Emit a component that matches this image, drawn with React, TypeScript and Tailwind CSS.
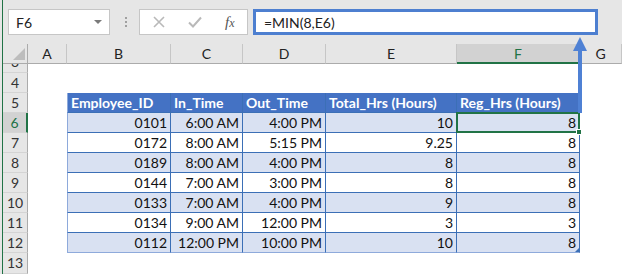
import React from "react";

const FONT = { fontFamily: "Lato, 'Open Sans', sans-serif" };

const COLS = ["A", "B", "C", "D", "E", "F", "G"];

const rows: string[][] = [
  ["0101", "6:00 AM", "4:00 PM", "10", "8"],
  ["0172", "8:00 AM", "5:15 PM", "9.25", "8"],
  ["0189", "8:00 AM", "4:00 PM", "8", "8"],
  ["0144", "7:00 AM", "3:00 PM", "8", "8"],
  ["0133", "7:00 AM", "4:00 PM", "9", "8"],
  ["0134", "9:00 AM", "12:00 PM", "3", "3"],
  ["0112", "12:00 PM", "10:00 PM", "10", "8"],
];

const heads = ["Employee_ID", "In_Time", "Out_Time", "Total_Hrs (Hours)", "Reg_Hrs (Hours)"];

function RowHead({ n, active, clip }: { n: number; active?: boolean; clip?: boolean }) {
  return (
    <div
      className={`flex justify-center overflow-hidden border-b border-[#d4d4d4] text-[14px] ${
        clip ? "items-end" : "items-center"
      } ${
        active
          ? "bg-[#d2d2d2] text-[#217346] border-r-2 border-r-[#217346]"
          : "bg-[#e6e6e6] text-[#333] border-r border-r-[#ababab]"
      }`}
    >
      <span className="leading-[20px] shrink-0">{n}</span>
    </div>
  );
}

function Blank() {
  return <div className="bg-white" />;
}

export default function App() {
  return (
    <div className="relative flex w-[622px] h-[274px] overflow-hidden bg-white" style={FONT}>
      <div className="w-[2px] bg-[#e6e6e6]" />
      <div className="w-[1px] bg-[#217346]" />
      <div className="flex-1 flex flex-col">
        {/* formula bar */}
        <div className="h-[44px] bg-[#e6e6e6] flex items-start pt-[9px]">
          <div className="ml-[5px] w-[102px] h-[26px] bg-white border border-[#c6c6c6] flex items-center justify-between pl-[7px] pr-[7px] text-[14px] text-[#222]">
            <span>F6</span>
            <svg width="8" height="5" viewBox="0 0 8 5">
              <polygon points="0,0 8,0 4,4" fill="#7a7a7a" />
            </svg>
          </div>
          <div className="ml-[14px] w-[3px] h-[26px] flex flex-col items-center justify-center gap-[2px]">
            <div className="w-[2px] h-[2px] bg-[#a0a0a0]" />
            <div className="w-[2px] h-[2px] bg-[#a0a0a0]" />
            <div className="w-[2px] h-[2px] bg-[#a0a0a0]" />
          </div>
          <div className="ml-[12px] w-[109px] h-[26px] bg-white border border-[#c6c6c6] flex items-center">
            <svg className="ml-[13px]" width="12" height="12" viewBox="0 0 12 12">
              <path d="M1 1 L11 11 M11 1 L1 11" stroke="#b9b9b9" strokeWidth="1.6" />
            </svg>
            <svg className="ml-[23px]" width="14" height="12" viewBox="0 0 14 12">
              <path d="M1 6.5 L5 10.5 L13 1.5" stroke="#b9b9b9" strokeWidth="2" fill="none" />
            </svg>
            <span
              className="ml-[23px] text-[15px] italic text-[#555]"
              style={{ fontFamily: "'Liberation Serif', serif" }}
            >
              f<span className="text-[12px]">x</span>
            </span>
          </div>
          <div className="ml-[5px] w-[345px] h-[26px] bg-white border-[3px] border-[#4d7fd0] flex items-center pl-[8px] text-[14px] text-[#222]">
            =MIN(8,E6)
          </div>
        </div>

        {/* sheet */}
        <div className="grid grid-cols-[25px_39px_104px_72px_83px_131px_123px_42px] grid-rows-[20px_9px_repeat(9,20px)_21px]">
          {/* column headers */}
          <div className="bg-[#e6e6e6] border-b border-b-[#ababab] border-r border-r-[#ababab] flex items-end justify-end pr-[2px] pb-[3px]">
            <svg width="12" height="12" viewBox="0 0 12 12">
              <polygon points="12,0 12,12 0,12" fill="#bdbdbd" />
            </svg>
          </div>
          {COLS.map((c) =>
            c === "F" ? (
              <div
                key={c}
                className="bg-[#d2d2d2] border-r border-r-[#c0c0c0] border-b-2 border-b-[#217346] flex items-center justify-center text-[14px] text-[#217346]"
              >
                {c}
              </div>
            ) : (
              <div
                key={c}
                className="bg-[#e6e6e6] border-r border-r-[#c6c6c6] border-b border-b-[#ababab] flex items-center justify-center text-[14px] text-[#222]"
              >
                {c}
              </div>
            )
          )}

          {/* row 3 (partial) & 4 */}
          <RowHead n={3} clip />
          {COLS.map((c) => (
            <Blank key={"r3" + c} />
          ))}
          <RowHead n={4} />
          {COLS.map((c) => (
            <Blank key={"r4" + c} />
          ))}

          {/* row 5 header */}
          <RowHead n={5} />
          <Blank />
          {heads.map((h, i) => (
            <div
              key={h}
              className={`bg-[#4472c4] text-white font-bold text-[14px] flex items-center pl-[3px] whitespace-nowrap border-r border-r-[#3b6fb6] border-b border-b-[#3b6fb6] ${
                i === 0 ? "border-l border-l-[#8eaadb]" : ""
              }`}
            >
              {h}
            </div>
          ))}
          <Blank />

          {rows.map((r, ri) => (
            <React.Fragment key={ri}>
              <RowHead n={6 + ri} active={ri === 0} />
              <Blank />
              {r.map((v, ci) => (
                <div
                  key={ci}
                  className={`relative flex items-center justify-end pr-[3px] text-[14px] text-[#111] border-r border-r-[#3b6fb6] ${
                    ri === rows.length - 1 ? "border-b border-b-[#8eaadb]" : "border-b border-b-[#3b6fb6]"
                  } ${ci === 0 ? "border-l border-l-[#8eaadb]" : ""} ${
                    ri % 2 === 0 ? "bg-[#d9e1f2]" : "bg-white"
                  }`}
                >
                  {v}
                  {ri === 0 && ci === 4 && (
                    <div className="absolute -left-[1px] -top-[1px] -right-[1px] -bottom-[1px] border-2 border-[#217346] z-10">
                      <div className="absolute -right-[4px] -bottom-[4px] w-[6px] h-[6px] bg-[#217346] border border-white" />
                    </div>
                  )}
                  {ri === rows.length - 1 && ci === 4 && (
                    <svg className="absolute right-0 bottom-0" width="4" height="4" viewBox="0 0 4 4">
                      <polygon points="4,0 4,4 0,4" fill="#3b6fb6" />
                    </svg>
                  )}
                </div>
              ))}
              <Blank />
            </React.Fragment>
          ))}

          <RowHead n={13} />
          {COLS.map((c) => (
            <Blank key={"r13" + c} />
          ))}
        </div>
      </div>

      {/* arrow pointing to the formula bar */}
      <svg className="absolute left-[573px] top-[37px] z-20" width="14" height="76" viewBox="0 0 14 76">
        <polygon points="7,0 14,14 0,14" fill="#4f81d4" />
        <rect x="5" y="13" width="4" height="63" fill="#4f81d4" />
      </svg>
    </div>
  );
}
